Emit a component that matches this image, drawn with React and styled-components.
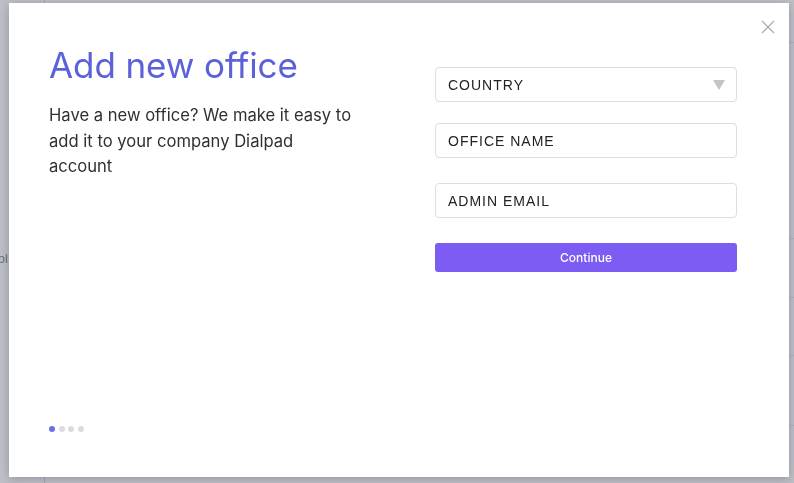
import React from 'react';
import styled, { createGlobalStyle } from 'styled-components';

const GlobalStyle = createGlobalStyle`
  html, body {
    margin: 0;
    padding: 0;
    height: 100%;
  }
  body {
    font-family: Inter, 'Noto Sans', sans-serif;
    overflow: hidden;
  }
`;

const Shell = styled.div`
  display: flex;
  height: 100vh;
  background: #bfc1c8;
`;

const Sidebar = styled.div`
  width: 45px;
  flex-shrink: 0;
  border-right: 1px solid #a7a9b1;
  display: flex;
  align-items: center;
  padding-top: 34px;
  box-sizing: border-box;
  overflow: hidden;
`;

const SideLabel = styled.span`
  margin-left: -16px;
  font-family: 'Liberation Sans', Arial, sans-serif;
  font-size: 13px;
  color: #6f7178;
  white-space: nowrap;
`;

const Main = styled.div`
  flex: 1;
  display: flex;
  flex-direction: column;
`;

const Row = styled.div`
  height: ${(p) => p.h}px;
  border-bottom: 1px solid #afb1b9;
`;

const Modal = styled.div`
  position: fixed;
  left: 9px;
  top: 3px;
  width: 780px;
  height: 474px;
  box-sizing: border-box;
  background: #fff;
  box-shadow: 0 2px 10px rgba(40, 42, 60, 0.3);
  padding: 40px 52px 45px 40px;
  display: flex;
  flex-direction: column;
`;

const Close = styled.button`
  position: absolute;
  top: 15px;
  right: 12px;
  width: 18px;
  height: 18px;
  padding: 0;
  border: none;
  background: none;
  cursor: pointer;
`;

const Body = styled.div`
  display: grid;
  grid-template-columns: 1fr 302px;
  column-gap: 40px;
  flex: 1;
`;

const Intro = styled.div`
  display: flex;
  flex-direction: column;
`;

const Title = styled.h1`
  margin: 0;
  font-size: 35px;
  line-height: 44px;
  font-weight: 400;
  color: #5a61d9;
  letter-spacing: -0.1px;
`;

const Lead = styled.p`
  margin: 16px 0 0;
  max-width: 306px;
  font-size: 16.6px;
  line-height: 25.5px;
  color: #303030;
`;

const Form = styled.form`
  display: flex;
  flex-direction: column;
  padding-top: 24px;
`;

const Field = styled.div`
  position: relative;
  margin-top: ${(p) => p.gap}px;
`;

const Input = styled.input`
  width: 100%;
  height: 35px;
  box-sizing: border-box;
  border: 1px solid #dedede;
  border-radius: 4px;
  padding: 1px 12px 0;
  font-family: 'Liberation Sans', Arial, sans-serif;
  font-size: 14px;
  letter-spacing: 1px;
  text-transform: uppercase;
  color: #222;
  background: #fff;
  outline: none;
  &::placeholder {
    color: #222;
    opacity: 1;
  }
`;

const Caret = styled.span`
  position: absolute;
  right: 12px;
  top: 13px;
  width: 0;
  height: 0;
  border-left: 6px solid transparent;
  border-right: 6px solid transparent;
  border-top: 10px solid #c4c4c4;
`;

const Submit = styled.button`
  margin-top: 25px;
  height: 29px;
  border: none;
  border-radius: 3px;
  background: #7c5cf3;
  color: #fff;
  font-family: Inter, sans-serif;
  font-size: 12px;
  font-weight: 500;
  cursor: pointer;
`;

const Dots = styled.div`
  display: flex;
  gap: 3.5px;
`;

const Dot = styled.span`
  width: 6px;
  height: 6px;
  border-radius: 50%;
  background: ${(p) => (p.active ? '#6b6ee6' : '#dcdcdf')};
`;

export default function App() {
  return (
    <>
      <GlobalStyle />
      <Shell>
        <Sidebar>
          <SideLabel>Tool</SideLabel>
        </Sidebar>
        <Main>
          <Row h={42} />
          <Row h={195} />
          <Row h={58} />
          <Row h={57} />
          <Row h={69} />
        </Main>
      </Shell>
      <Modal>
        <Close aria-label="Close">
          <svg width="18" height="18" viewBox="0 0 18 18">
            <path d="M3 3L15 15M15 3L3 15" stroke="#a9a9a9" strokeWidth="1.2" fill="none" />
          </svg>
        </Close>
        <Body>
          <Intro>
            <Title>Add new office</Title>
            <Lead>
              Have a new office? We make it easy to add it to your company
              Dialpad account
            </Lead>
          </Intro>
          <Form onSubmit={(e) => e.preventDefault()}>
            <Field gap={0}>
              <Input placeholder="Country" readOnly />
              <Caret />
            </Field>
            <Field gap={21}>
              <Input placeholder="Office name" />
            </Field>
            <Field gap={25}>
              <Input placeholder="Admin email" />
            </Field>
            <Submit type="submit">Continue</Submit>
          </Form>
        </Body>
        <Dots>
          <Dot active />
          <Dot />
          <Dot />
          <Dot />
        </Dots>
      </Modal>
    </>
  );
}
